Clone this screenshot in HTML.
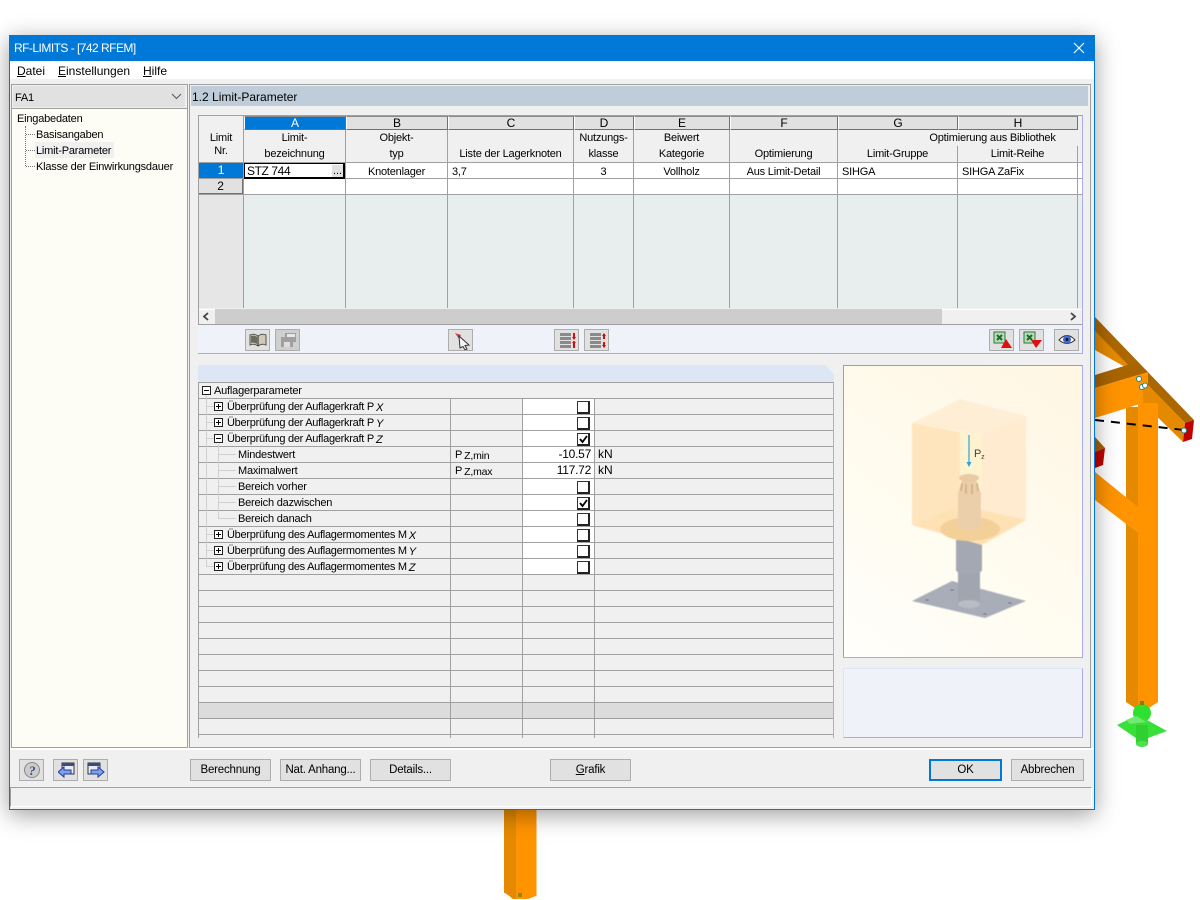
<!DOCTYPE html>
<html><head><meta charset="utf-8"><title>RF-LIMITS</title>
<style>
html,body{margin:0;padding:0;width:1200px;height:900px;overflow:hidden;background:#fff}
body{position:relative;font:11px/18px "Liberation Sans",sans-serif;color:#000;letter-spacing:-.2px}
div,svg{position:absolute;box-sizing:border-box}
.t{white-space:nowrap;height:14px}
.c{text-align:center}
.r{text-align:right}
.n{letter-spacing:0;font-size:12px;line-height:14px}
.b{background:#e1e1e1;border:1px solid #adadad;text-align:center;line-height:21px;font-size:11.500px;height:22px;top:759px;letter-spacing:-.2px}
.i{background:#e1e1e1;border:1px solid #adadad;width:25px;height:22px;top:329px}
.h{background:#e1e1e1;top:116px;height:14px;border-top:1px solid #8a8a8a;border-left:1px solid #fff;border-bottom:1px solid #707070;border-right:1px solid #707070;text-align:center;line-height:13px;font-size:12px;letter-spacing:0}
.v{width:1px;background:#a0a0a0}
.l{height:1px;background:#a0a0a0}
.k{width:13px;height:13px;background:#fff;border:1px solid #333;border-right:2px solid #222;border-bottom:2px solid #222;left:577px}
.p{width:9px;height:9px;border:1px solid #222;background:#fff}
.p:before{content:"";position:absolute;left:1px;top:3px;width:5px;height:1px;background:#000}
.pp:after{content:"";position:absolute;left:3px;top:1px;width:1px;height:5px;background:#000}
.s{margin-left:2px;font-style:italic;position:relative;top:1px}
.d{height:1px;background:#d0d0d0}
</style></head><body>

<svg style="left:0;top:0" width="1200" height="900" viewBox="0 0 1200 900">
<polygon points="1095,331 1132,367 1127,368 1095,350" fill="#e58a00"/>
<polygon points="1095,317 1194,420 1185,423 1095,331" fill="#ad6700"/>
<polygon points="1143,390 1148,385 1185,423 1183,442 1143,403" fill="#e58a00"/>
<polygon points="1185,423 1194,420 1192,439 1183,442" fill="#c00000"/>
<rect x="1126" y="407" width="12" height="295" fill="#e58a00"/>
<rect x="1138" y="403" width="20" height="299" fill="#ff9400"/>
<polygon points="1126,702 1138,710 1138,700 1126,695" fill="#e58a00"/>
<polygon points="1138,710 1146,710 1158,702 1138,695" fill="#ff9400"/>
<polygon points="1095,375 1137,362 1148,372 1095,388" fill="#a86400"/>
<polygon points="1095,388 1148,372 1148,385 1143,390 1143,403 1095,418" fill="#ff9400"/>
<polygon points="1095,437 1105,448 1095,452" fill="#a86400"/>
<polygon points="1095,452 1105,448 1103,465 1095,468" fill="#c00000"/>
<polygon points="1095,472 1138,507 1138,533 1095,500" fill="#ff9400"/>
<line x1="1095" y1="420" x2="1184" y2="430" stroke="#000" stroke-width="2" stroke-dasharray="9 7"/>
<g fill="#fff" stroke="#1a8a94" stroke-width="1"><circle cx="1139" cy="379" r="2.500"/><circle cx="1142" cy="387" r="2.500"/><circle cx="1145" cy="385.500" r="2.500"/><circle cx="1184" cy="430.500" r="2.500"/></g>
<circle cx="1142" cy="713" r="9" fill="#30e030"/>
<polygon points="1117,725 1138,715 1167,731 1140,741" fill="#3ae03a"/>
<polygon points="1126,720 1136,716 1146,722 1130,724" fill="#70ea70"/>
<rect x="1136" y="725" width="12" height="19" fill="#30d030"/>
<ellipse cx="1142" cy="744" rx="6" ry="3" fill="#4fe04f"/>
<rect x="1140" y="701" width="4" height="4" fill="#8a7a00"/>
<rect x="504" y="800" width="12" height="93" fill="#e58a00"/>
<rect x="516" y="800" width="20" height="96" fill="#ff9400"/>
<rect x="536" y="800" width="1" height="96" fill="#ffc880"/>
<polygon points="504,892 513,899 516,899 516,890" fill="#e58a00"/>
<polygon points="516,899 528,899 536,896 516,890" fill="#ff9400"/>
<rect x="518" y="893" width="4" height="4" fill="#8a8a00"/>
</svg>

<div style="left:9px;top:35px;width:1086px;height:775px;background:#f0f0f0;border:1px solid #0078d7;box-shadow:0 5px 22px rgba(0,0,0,.38)"></div>
<div style="left:9px;top:35px;width:1086px;height:26px;background:#0078d7"></div>
<div class="t" style="left:14px;top:41px;color:#fff;font-size:12px;line-height:14px;letter-spacing:-.53px">RF-LIMITS - [742 RFEM]</div>
<svg style="left:1073px;top:42px" width="12" height="12"><path d="M1 1L11 11M11 1L1 11" stroke="#fff" stroke-width="1.200" fill="none"/></svg>
<div style="left:10px;top:61px;width:1084px;height:18px;background:#fff"></div>
<div class="t n" style="left:17px;top:64px"><u>D</u>atei</div>
<div class="t n" style="left:58px;top:64px"><u>E</u>instellungen</div>
<div class="t n" style="left:143px;top:64px"><u>H</u>ilfe</div>

<!-- left panel -->
<div style="left:11px;top:84px;width:177px;height:664px;border:1px solid #a0a0a0;background:#f0f0f0"></div>
<div style="left:13px;top:86px;width:172px;height:21px;background:#e1e1e1"></div>
<div class="t" style="left:15px;top:89px">FA1</div>
<svg style="left:171px;top:93px" width="11" height="7"><path d="M1 1L5.500 5.500L10 1" stroke="#555" fill="none"/></svg>
<div style="left:12px;top:108px;width:175px;height:639px;background:#fdfdf5;border-top:1px solid #a0a0a0"></div>
<div class="t" style="left:17px;top:110px">Eingabedaten</div>
<div style="left:25px;top:126px;width:1px;height:40px;border-left:1px dotted #777"></div>
<div style="left:26px;top:134px;width:9px;border-top:1px dotted #777"></div>
<div style="left:26px;top:150px;width:9px;border-top:1px dotted #777"></div>
<div style="left:26px;top:166px;width:9px;border-top:1px dotted #777"></div>
<div style="left:35px;top:142px;width:79px;height:16px;background:#f0f0f0"></div>
<div class="t" style="left:36px;top:126px">Basisangaben</div>
<div class="t" style="left:36px;top:142px">Limit-Parameter</div>
<div class="t" style="left:36px;top:158px">Klasse der Einwirkungsdauer</div>

<!-- right panel -->
<div style="left:189px;top:84px;width:902px;height:664px;border:1px solid #a0a0a0;background:#f0f0f0"></div>
<div style="left:191px;top:86px;width:897px;height:20px;background:#bfccd9"></div>
<div class="t n" style="left:192px;top:90px">1.2 Limit-Parameter</div>

<!-- table -->
<div style="left:198px;top:115px;width:885px;height:210px;background:#f0f0f0;border-left:1px solid #a0a0a0;border-top:1px solid #a0a0a0;border-right:1px solid #aaaaee"></div>
<div style="left:199px;top:163px;width:883px;height:32px;background:#fff"></div>
<div style="left:199px;top:195px;width:44px;height:113px;background:#e6e6e6"></div>
<div style="left:244px;top:195px;width:838px;height:113px;background:#e8eeee"></div>
<div class="l" style="left:199px;top:162px;width:883px"></div>
<div class="l" style="left:199px;top:178px;width:883px"></div>
<div class="l" style="left:199px;top:194px;width:883px"></div>
<div class="v" style="left:243px;top:116px;height:192px"></div>
<div class="v" style="left:345px;top:130px;height:178px"></div>
<div class="v" style="left:447px;top:130px;height:178px"></div>
<div class="v" style="left:573px;top:130px;height:178px"></div>
<div class="v" style="left:633px;top:130px;height:178px"></div>
<div class="v" style="left:729px;top:130px;height:178px"></div>
<div class="v" style="left:837px;top:130px;height:178px"></div>
<div class="v" style="left:957px;top:146px;height:162px"></div>
<div class="v" style="left:1077px;top:146px;height:162px"></div>
<div class="h" style="left:244px;width:102px;background:#0078d7;color:#fff">A</div>
<div class="h" style="left:346px;width:102px">B</div>
<div class="h" style="left:448px;width:126px">C</div>
<div class="h" style="left:574px;width:60px">D</div>
<div class="h" style="left:634px;width:96px">E</div>
<div class="h" style="left:730px;width:108px">F</div>
<div class="h" style="left:838px;width:120px">G</div>
<div class="h" style="left:958px;width:120px">H</div>

<div class="t c" style="left:199px;width:44px;top:129px">Limit</div>
<div class="t c" style="left:199px;width:44px;top:142px">Nr.</div>
<div class="t c" style="left:244px;width:101px;top:129px">Limit-</div>
<div class="t c" style="left:244px;width:101px;top:145px">bezeichnung</div>
<div class="t c" style="left:346px;width:101px;top:129px">Objekt-</div>
<div class="t c" style="left:346px;width:101px;top:145px">typ</div>
<div class="t c" style="left:448px;width:125px;top:145px">Liste der Lagerknoten</div>
<div class="t c" style="left:574px;width:59px;top:129px">Nutzungs-</div>
<div class="t c" style="left:574px;width:59px;top:145px">klasse</div>
<div class="t c" style="left:634px;width:95px;top:129px">Beiwert</div>
<div class="t c" style="left:634px;width:95px;top:145px">Kategorie</div>
<div class="t c" style="left:730px;width:107px;top:145px">Optimierung</div>
<div class="t c" style="left:838px;width:309px;top:129px">Optimierung aus Bibliothek</div>
<div class="t c" style="left:838px;width:119px;top:145px">Limit-Gruppe</div>
<div class="t c" style="left:958px;width:119px;top:145px">Limit-Reihe</div>

<div class="t c" style="left:199px;width:44px;height:15px;top:163px;background:#0078d7;color:#fff;font-size:12px;line-height:15px">1</div>
<div class="t c" style="left:199px;width:44px;height:15px;top:179px;background:#e1e1e1;border-bottom:1px solid #707070;border-right:1px solid #707070;font-size:12px;line-height:14px">2</div>
<div style="left:244px;top:163px;width:101px;height:16px;border:1px solid #000;border-bottom-width:2px;border-right-width:2px;background:#fff"></div>
<div class="t n" style="left:247px;top:164px;letter-spacing:-.4px">STZ 744</div>
<div class="t c" style="left:332px;top:165px;width:11px;height:12px;background:#e1e1e1;line-height:12px;letter-spacing:0">...</div>
<div class="t c" style="left:346px;width:101px;top:163px">Knotenlager</div>
<div class="t" style="left:452px;top:163px">3,7</div>
<div class="t c" style="left:574px;width:59px;top:163px">3</div>
<div class="t c" style="left:634px;width:95px;top:163px">Vollholz</div>
<div class="t c" style="left:730px;width:107px;top:163px">Aus Limit-Detail</div>
<div class="t" style="left:842px;top:163px">SIHGA</div>
<div class="t" style="left:962px;top:163px">SIHGA ZaFix</div>

<!-- scrollbar -->
<div style="left:199px;top:309px;width:883px;height:16px;background:#f0f0f0;border-top:1px solid #fff;border-bottom:1px solid #a0a0a0"></div>
<div style="left:215px;top:309px;width:727px;height:15px;background:#cdcdcd"></div>
<svg style="left:202px;top:312px" width="8" height="9"><path d="M6 1L2 4.500L6 8" stroke="#444" stroke-width="1.800" fill="none"/></svg>
<svg style="left:1069px;top:312px" width="8" height="9"><path d="M2 1L6 4.500L2 8" stroke="#444" stroke-width="1.800" fill="none"/></svg>

<!-- toolbar -->
<div style="left:198px;top:325px;width:885px;height:29px;background:#eff3f9;border-bottom:1px solid #aaaaee;border-right:1px solid #aaaaee"></div>
<div class="i" style="left:245px"><svg style="left:3px;top:3px" width="18" height="14"><path d="M1 2Q5 0 9 3Q13 0 17 2V12Q13 10 9 13Q5 10 1 12Z" fill="#cfc9b8" stroke="#555"/><path d="M2 3Q6 2 8 4V11Q5 9 2 10Z" fill="#6f6a60"/><path d="M9 3V13" stroke="#222"/></svg></div>
<div class="i" style="left:275px;background:#cfcfcf"><svg style="left:4px;top:2px" width="17" height="16"><path d="M1 5H5V1H16V10H13V15H1Z" fill="#a0a0a0"/><rect x="7" y="2" width="8" height="3" fill="#e8e8e8"/><rect x="4" y="10" width="6" height="5" fill="#dedede"/></svg></div>
<div class="i" style="left:448px"><svg style="left:5px;top:2px" width="18" height="18"><path d="M1 1L7 3L5 7Z" fill="#d04040"/><path d="M5 4L15 13L11 13.500L13 17L11 18L9 14.500L6 16Z" fill="#f4f4f4" stroke="#333"/></svg></div>
<div class="i" style="left:554px"><svg style="left:4px;top:2px" width="18" height="18"><g fill="#8a8a8a"><rect x="1" y="1" width="11" height="3"/><rect x="1" y="5" width="11" height="3"/><rect x="1" y="9" width="11" height="3"/><rect x="1" y="13" width="11" height="3"/></g><path d="M15 1V6M15 10V16" stroke="#d01010" stroke-width="2"/><path d="M13 5L15 8L17 5ZM13 11L15 8.500L17 11Z" fill="#d01010"/></svg></div>
<div class="i" style="left:584px"><svg style="left:4px;top:2px" width="18" height="18"><g fill="#8a8a8a"><rect x="1" y="1" width="11" height="3"/><rect x="1" y="5" width="11" height="3"/><rect x="1" y="9" width="11" height="3"/><rect x="1" y="13" width="11" height="3"/></g><path d="M15 2V7M15 10V15" stroke="#d01010" stroke-width="2"/><path d="M13 4L15 1L17 4ZM13 13L15 16L17 13Z" fill="#d01010"/></svg></div>
<div class="i" style="left:989px"><svg style="left:3px;top:1px" width="20" height="19"><rect x="1" y="1" width="11" height="11" fill="#b8dcb8" stroke="#2a7a3a"/><path d="M4 4L9 9M9 4L4 9" stroke="#1a6a2a" stroke-width="2"/><path d="M13 8L19 17H8Z" fill="#e01010"/></svg></div>
<div class="i" style="left:1019px"><svg style="left:3px;top:1px" width="20" height="19"><rect x="1" y="1" width="11" height="11" fill="#b8dcb8" stroke="#2a7a3a"/><path d="M4 4L9 9M9 4L4 9" stroke="#1a6a2a" stroke-width="2"/><path d="M8 9H19L13 17Z" fill="#e01010"/></svg></div>
<div class="i" style="left:1054px"><svg style="left:3px;top:3px" width="18" height="14"><path d="M1 7Q9 -2 17 7Q9 14 1 7Z" fill="#fff" stroke="#333"/><circle cx="9" cy="6.500" r="4" fill="#3f68d8"/><circle cx="9" cy="6.500" r="1.500" fill="#111"/></svg></div>

<!-- lower grid -->
<svg style="left:198px;top:365px" width="636" height="17"><polygon points="0,0 627,0 636,9 636,17 0,17" fill="#dce6f5"/></svg>
<div style="left:198px;top:382px;width:636px;height:356px;background:#f0f0f0;border-right:1px solid #aaaaee;border-left:1px solid #a0a0a0"></div>
<div style="left:523px;top:399px;width:71px;height:175px;background:#fff"></div>
<div style="left:199px;top:703px;width:634px;height:15px;background:#dcdcdc"></div>
<div style="left:199px;top:382px;width:634px;height:353px;background:repeating-linear-gradient(to bottom,#a0a0a0 0,#a0a0a0 1px,transparent 1px,transparent 16px)"></div>
<div class="v" style="left:450px;top:398px;height:340px"></div>
<div class="v" style="left:522px;top:398px;height:340px"></div>
<div class="v" style="left:594px;top:398px;height:340px"></div>

<div style="left:206px;top:394px;width:1px;height:172px;background:#d0d0d0"></div>
<div class="d" style="left:206px;top:406px;width:8px"></div>
<div class="d" style="left:206px;top:422px;width:8px"></div>
<div class="d" style="left:206px;top:438px;width:8px"></div>
<div class="d" style="left:206px;top:534px;width:8px"></div>
<div class="d" style="left:206px;top:550px;width:8px"></div>
<div class="d" style="left:206px;top:566px;width:8px"></div>
<div style="left:218px;top:444px;width:1px;height:74px;background:#d0d0d0"></div>
<div class="d" style="left:218px;top:454px;width:18px"></div>
<div class="d" style="left:218px;top:470px;width:18px"></div>
<div class="d" style="left:218px;top:486px;width:18px"></div>
<div class="d" style="left:218px;top:502px;width:18px"></div>
<div class="d" style="left:218px;top:518px;width:18px"></div>

<div class="p" style="left:202px;top:386px"></div>
<div class="p pp" style="left:214px;top:402px"></div>
<div class="p pp" style="left:214px;top:418px"></div>
<div class="p" style="left:214px;top:434px"></div>
<div class="p pp" style="left:214px;top:530px"></div>
<div class="p pp" style="left:214px;top:546px"></div>
<div class="p pp" style="left:214px;top:562px"></div>

<div class="t" style="left:214px;top:382px">Auflagerparameter</div>
<div class="t" style="left:227px;top:398px;letter-spacing:-.27px">Überprüfung der Auflagerkraft P<span class="s">X</span></div>
<div class="t" style="left:227px;top:414px;letter-spacing:-.27px">Überprüfung der Auflagerkraft P<span class="s">Y</span></div>
<div class="t" style="left:227px;top:430px;letter-spacing:-.27px">Überprüfung der Auflagerkraft P<span class="s">Z</span></div>
<div class="t" style="left:238px;top:446px">Mindestwert</div>
<div class="t" style="left:238px;top:462px">Maximalwert</div>
<div class="t" style="left:238px;top:478px">Bereich vorher</div>
<div class="t" style="left:238px;top:494px">Bereich dazwischen</div>
<div class="t" style="left:238px;top:510px">Bereich danach</div>
<div class="t" style="left:227px;top:526px;letter-spacing:-.27px">Überprüfung des Auflagermomentes M<span class="s">X</span></div>
<div class="t" style="left:227px;top:542px;letter-spacing:-.27px">Überprüfung des Auflagermomentes M<span class="s">Y</span></div>
<div class="t" style="left:227px;top:558px;letter-spacing:-.27px">Überprüfung des Auflagermomentes M<span class="s">Z</span></div>
<div class="t" style="left:455px;top:446px">P<span class="s" style="font-style:normal;font-size:10.500px">Z,min</span></div>
<div class="t" style="left:455px;top:462px">P<span class="s" style="font-style:normal;font-size:10.500px">Z,max</span></div>
<div class="t r n" style="left:523px;width:68px;top:447px;letter-spacing:-.25px">-10.57</div>
<div class="t r n" style="left:523px;width:68px;top:463px;letter-spacing:-.25px">117.72</div>
<div class="t n" style="left:598px;top:447px">kN</div>
<div class="t n" style="left:598px;top:463px">kN</div>

<div class="k" style="top:401px"></div>
<div class="k" style="top:417px"></div>
<div class="k" style="top:433px"><svg style="left:1px;top:1px" width="9" height="9"><path d="M1 4L3.500 7L8 1" stroke="#000" stroke-width="1.800" fill="none"/></svg></div>
<div class="k" style="top:481px"></div>
<div class="k" style="top:497px"><svg style="left:1px;top:1px" width="9" height="9"><path d="M1 4L3.500 7L8 1" stroke="#000" stroke-width="1.800" fill="none"/></svg></div>
<div class="k" style="top:513px"></div>
<div class="k" style="top:529px"></div>
<div class="k" style="top:545px"></div>
<div class="k" style="top:561px"></div>

<!-- image -->
<div style="left:843px;top:365px;width:240px;height:293px;background:linear-gradient(35deg,#fffefb 0%,#fffbee 50%,#fff6e3 100%);border-top:1px solid #a0a0a0;border-left:1px solid #a0a0a0;border-right:1px solid #aaaaee;border-bottom:1px solid #aaaaee"></div>
<svg style="left:843px;top:365px" width="240" height="293" viewBox="843 365 240 293">
<defs><filter id="bl"><feGaussianBlur stdDeviation=".6"/></filter></defs>
<g filter="url(#bl)">
<polygon points="912,601 952,581 1026,601 985,618" fill="#a8adb8"/>
<rect x="958" y="570" width="22" height="33" fill="#a0a5af"/>
<ellipse cx="969" cy="604" rx="11" ry="4" fill="#b8bcc4"/>
<rect x="956" y="540" width="26" height="30" fill="#a3a8b2"/>
<ellipse cx="969" cy="570" rx="13" ry="4" fill="#a3a8b2"/>
<polygon points="912,423 960,399 1026,416 982,435" fill="#ffeed6"/>
<polygon points="912,423 960,432 960,505 912,525" fill="#ffe5bd"/>
<polygon points="960,432 982,435 982,505 960,505" fill="#fff2cf"/>
<polygon points="982,435 1026,416 1026,520 982,545" fill="#ffebcf"/>
<polygon points="912,525 960,505 1026,520 982,545" fill="#ffe2b4"/>
<ellipse cx="970" cy="529" rx="30" ry="12" fill="#f4d099"/>
<path d="M958 527V493L962 481H976L981 493V527Q970 534 958 527Z" fill="#ebcfaa"/>
<ellipse cx="969" cy="478" rx="10" ry="4" fill="#e8cba3"/>
<path d="M962 483L961 491M966 484V494M972 484V494M977 483L978 491" stroke="#cfa97a" stroke-width="1.500"/>
</g>
<g fill="#8a8f9a"><ellipse cx="952" cy="590" rx="2" ry="1"/><ellipse cx="927" cy="600" rx="2" ry="1"/><ellipse cx="1010" cy="603" rx="2" ry="1"/><ellipse cx="985" cy="614" rx="2" ry="1"/></g>
<path d="M969 435V463" stroke="#2ea3d8" stroke-width="1.200"/><path d="M966.500 462L969 467L971.500 462Z" fill="#2ea3d8"/>
<text x="974" y="457" font-family="Liberation Sans" font-size="11" fill="#444">P<tspan font-size="7" dy="2">z</tspan></text>
</svg>
<div style="left:843px;top:668px;width:240px;height:70px;background:#eff3f9;border:1px solid #dce6f5;border-right:1px solid #aaaaee;border-bottom:1px solid #aaaaee"></div>

<!-- footer -->
<div style="left:10px;top:748px;width:1084px;height:2px;background:#fff"></div>
<div class="b" style="left:19px;width:25px"><svg style="left:3px;top:1px" width="18" height="18"><circle cx="9" cy="9" r="7.500" fill="#ccc" stroke="#888"/><text x="6" y="14" font-family="Liberation Serif" font-weight="bold" font-style="italic" font-size="13" fill="#3c4a80">?</text></svg></div>
<div class="b" style="left:53px;width:25px"><svg style="left:4px;top:1px" width="17" height="18"><rect x="4" y="2" width="12" height="11" fill="#e8ecf4" stroke="#333"/><rect x="4" y="2" width="12" height="3" fill="#3c4a80"/><path d="M0 11L6 6V9H13V13H6V16Z" fill="#7aa2ee" stroke="#2a3a90"/></svg></div>
<div class="b" style="left:83px;width:25px"><svg style="left:3px;top:1px" width="18" height="18"><rect x="1" y="2" width="12" height="11" fill="#e8ecf4" stroke="#333"/><rect x="1" y="2" width="12" height="3" fill="#3c4a80"/><path d="M17 11L11 6V9H4V13H11V16Z" fill="#7aa2ee" stroke="#2a3a90"/></svg></div>
<div class="b" style="left:190px;width:81px">Berechnung</div>
<div class="b" style="left:280px;width:81px">Nat. Anhang...</div>
<div class="b" style="left:370px;width:81px">Details...</div>
<div class="b" style="left:550px;width:81px"><u>G</u>rafik</div>
<div class="b" style="left:929px;width:73px;border:2px solid #0078d7;line-height:19px">OK</div>
<div class="b" style="left:1011px;width:73px">Abbrechen</div>
<div style="left:10px;top:787px;width:1082px;height:20px;background:#f0f0f0;border-top:1px solid #a0a0a0;border-left:1px solid #a0a0a0;border-bottom:1px solid #fff;border-right:1px solid #fff"></div>
</body></html>
